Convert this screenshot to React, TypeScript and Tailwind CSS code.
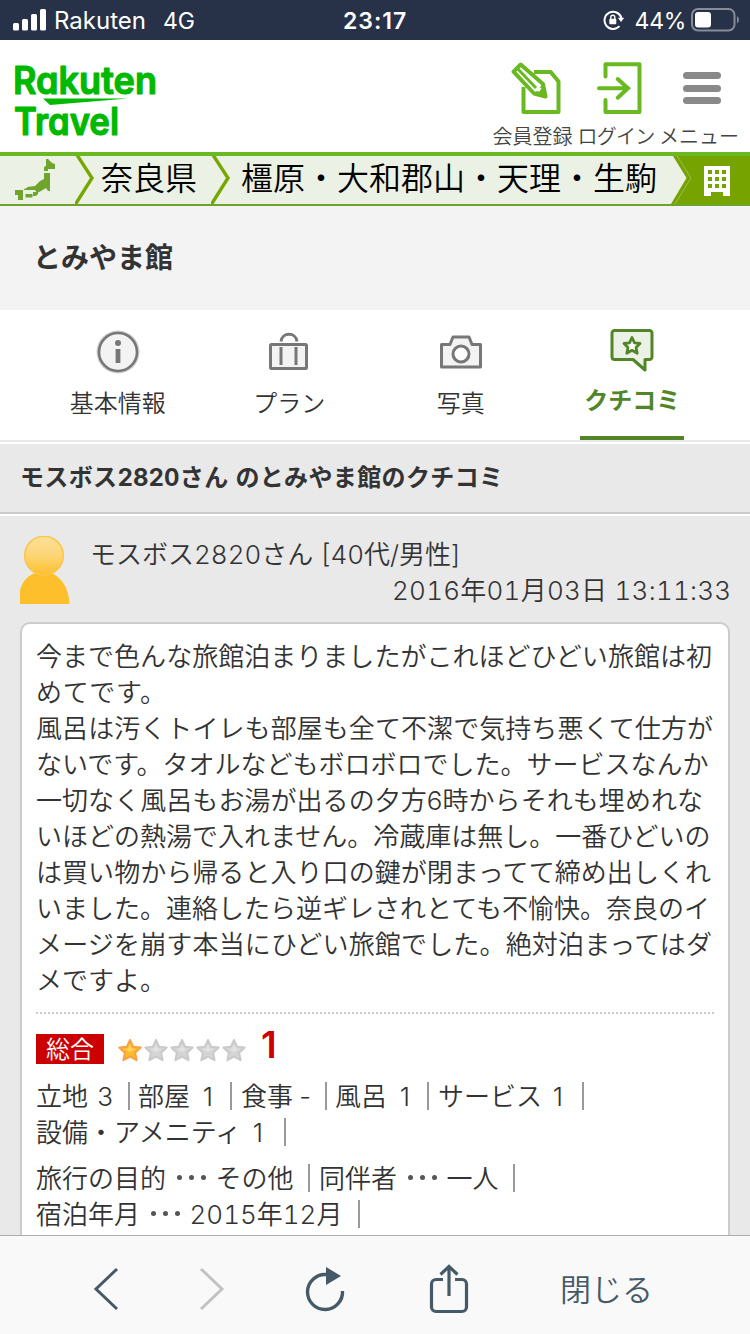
import React from 'react';

interface TabItem {
  label: string;
  icon: React.ReactNode;
  active?: boolean;
}

interface ScoreProps {
  className: string;
  label: string;
  value: string;
}

const REVIEW_LINES = [
  { text: '今まで色んな旅館泊まりましたがこれほどひどい旅館は初', className: 'w-[676px]' },
  { text: 'めてです。', className: 'w-[130px]' },
  { text: '風呂は汚くトイレも部屋も全て不潔で気持ち悪くて仕方が', className: 'w-[677px]' },
  { text: 'ないです。タオルなどもボロボロでした。サービスなんか', className: 'w-[672px]' },
  { text: '一切なく風呂もお湯が出るの夕方6時からそれも埋めれな', className: 'w-[667px]' },
  { text: 'いほどの熱湯で入れません。冷蔵庫は無し。一番ひどいの', className: 'w-[674px]' },
  { text: 'は買い物から帰ると入り口の鍵が閉まってて締め出しくれ', className: 'w-[675px]' },
  { text: 'いました。連絡したら逆ギレされとても不愉快。奈良のイ', className: 'w-[674px]' },
  { text: 'メージを崩す本当にひどい旅館でした。絶対泊まってはダ', className: 'w-[676px]' },
  { text: 'メですよ。', className: 'w-[130px]' },
];

function StatusBar() {
  return (
    <div className="flex h-10 shrink-0 items-center bg-[#273148] font-['Inter'] font-normal text-white">
      <div className="flex w-[343px] items-center pl-[13px]">
        <svg width="33" height="22" viewBox="0 0 33 22" fill="currentColor">
          <rect x="0" y="14" width="6" height="7.5" rx="1.5" />
          <rect x="9" y="10" width="6" height="11.5" rx="1.5" />
          <rect x="18" y="5" width="6" height="16.5" rx="1.5" />
          <rect x="27" y="0" width="6" height="21.5" rx="1.5" />
        </svg>
        <span className="ml-[8px] pt-[2px] text-[24px]">Rakuten</span>
        <span className="ml-[17px] pt-[2px] text-[23px]">4G</span>
      </div>
      <span className="pt-[2px] text-[23px] font-semibold tracking-[1px]">23:17</span>
      <div className="ml-auto flex items-center pr-[11px]">
        <svg width="22" height="22" viewBox="0 0 22 22" fill="none" stroke="currentColor" strokeWidth="2">
          <path d="M16.5 17.2A8.6 8.6 0 1 1 18.4 9" />
          <path d="M14.8 8.8h6.4L18 13z" fill="currentColor" stroke="none" />
          <rect x="6.3" y="9.8" width="7" height="5.4" rx="1" fill="currentColor" stroke="none" />
          <path d="M7.8 10V8.2a2 2 0 0 1 4 0V10" strokeWidth="1.4" />
        </svg>
        <span className="ml-[10px] pt-[2px] text-[23px] tracking-[-0.3px]">44%</span>
        <svg className="ml-[5px]" width="48" height="24" viewBox="0 0 48 24">
          <rect x="1" y="1" width="42.5" height="21.5" rx="6" fill="none" stroke="#868c99" strokeWidth="2" />
          <rect x="4" y="4" width="16" height="15.5" rx="3" fill="#fff" />
          <path d="M46 8v7.5q2-1.5 2-3.75T46 8z" fill="#868c99" />
        </svg>
      </div>
    </div>
  );
}

function Logo() {
  return (
    <svg className="overflow-visible" width="150" height="96" viewBox="0 -10 150 96" fill="#00b900" role="img" aria-label="Rakuten Travel">
      <g
        className="font-['Inter'] text-[38px] font-semibold [font-feature-settings:'cv11']"
        stroke="#00b900"
        strokeWidth="1.2"
        strokeLinejoin="round"
      >
        <text x="-1" y="32" textLength="144" lengthAdjust="spacingAndGlyphs">Rakuten</text>
        <text x="0" y="73" textLength="105" lengthAdjust="spacingAndGlyphs">Travel</text>
      </g>
      <path d="M29 36.500h85L36 43z" />
    </svg>
  );
}

function Header() {
  return (
    <header className="flex h-[116px] shrink-0 border-b-4 border-[#68b922] bg-white">
      <div className="ml-[14px] mt-[12px]">
        <Logo />
      </div>
      <nav className="ml-auto flex pr-[11px] text-[20px] leading-[24px] text-[#444]">
        <div className="flex w-[81px] flex-col items-center pt-5">
          <svg className="ml-[6px]" width="52" height="56" viewBox="0 0 52 56" fill="none" stroke="#68b922" strokeWidth="4">
            <path d="M24 12h16.700l7.800 9.500V52h-35V27" strokeLinejoin="round" />
            <path d="M10.700 4.500 3.500 11.700 24 33.500l11.500 3-2.500-12.500z" fill="#fff" strokeWidth="4" strokeLinejoin="round" />
            <path d="m7 8 19 20" strokeWidth="3" />
            <path d="m33 24-9 9.500 12.500 4.300z" fill="#68b922" stroke="none" />
            <path d="m27.500 27-2.500 4 4.500.5 2-3.500z" fill="#fff" stroke="none" />
          </svg>
          <span className="mt-[9px] whitespace-nowrap">会員登録</span>
        </div>
        <div className="ml-[3px] flex w-[80px] flex-col items-center pt-5">
          <svg className="ml-[8px]" width="46" height="56" viewBox="0 0 46 56" fill="none" stroke="#68b922" strokeWidth="4" strokeLinecap="round">
            <path d="M8.500 16.500V4.200h34V52h-34V40" strokeLinejoin="round" />
            <path d="M2 28.300h29M20.700 19l10.300 9.300-10.300 9.400" strokeLinejoin="miter" />
          </svg>
          <span className="mt-[9px] whitespace-nowrap tracking-[-0.800px]">ログイン</span>
        </div>
        <div className="ml-[3px] flex w-[80px] flex-col items-center">
          <div className="ml-[6px] mt-8 flex h-[53px] w-[38px] flex-col gap-[5.500px]">
            <span className="h-[7px] rounded-full bg-[#898989]" />
            <span className="h-[7px] rounded-full bg-[#898989]" />
            <span className="h-[7px] rounded-full bg-[#898989]" />
          </div>
          <span className="whitespace-nowrap">メニュー</span>
        </div>
      </nav>
    </header>
  );
}

function Chevron() {
  return (
    <svg className="shrink-0" width="20" height="48" viewBox="0 0 20 48" fill="none" stroke="#76a700" strokeWidth="3.400">
      <path d="M2-1 17 22 0 49" />
    </svg>
  );
}

function Breadcrumb() {
  return (
    <div className="flex h-[50px] shrink-0 items-center border-b-2 border-[#6ea32b] bg-[#ebf1e4] text-[32px] leading-[44px] text-black">
      <svg className="ml-[15px] shrink-0" width="40" height="42" viewBox="0 0 40 42" fill="#6fa52c">
        <path d="M31 0h2l4 4 3 1v5h-7v2h-4V8l2-1z" />
        <path d="M29 14h6v18h-2l-2-3-5 3-4 2-2-3H9v-1l3-1v-1l8-1 5-5 4-2z" />
        <path d="M18 33h5v2l-2 2h-3zM10.500 35h7v3.500h-7z" />
        <path d="M0 31h8v10H3v-5H0z" />
      </svg>
      <div className="ml-[20px] flex">
        <Chevron />
      </div>
      <span className="-mt-[2px] ml-[6px] w-[96px] whitespace-nowrap">奈良県</span>
      <div className="ml-[14px] flex">
        <Chevron />
      </div>
      <span className="-mt-[2px] ml-[10px] w-[416px] whitespace-nowrap">橿原・大和郡山・天理・生駒</span>
      <svg className="ml-auto shrink-0" width="80" height="48" viewBox="0 0 80 48">
        <path d="M3 0h77v48H1l15.500-26z" fill="#76a300" />
        <path d="m7 0 14 22L5 48" fill="none" stroke="#9dbf4d" />
        <path d="M34 10h26v30h-7v-4H41v4h-7z" fill="#fff" />
        <path
          d="M38 14h4v4h-4zM45 14h4v4h-4zM52 14h4v4h-4zM38 21h4v4h-4zM45 21h4v4h-4zM52 21h4v4h-4zM38 28h4v4h-4zM45 28h4v4h-4zM52 28h4v4h-4z"
          fill="#76a300"
        />
      </svg>
    </div>
  );
}

const TABS: TabItem[] = [
  {
    label: '基本情報',
    icon: (
      <svg width="44" height="44" viewBox="0 0 44 44">
        <circle cx="22" cy="22" r="21.500" fill="#cfcfcf" />
        <circle cx="22" cy="22" r="19" fill="#f3f3f3" stroke="#777" strokeWidth="2.600" />
        <circle cx="22" cy="13" r="3" fill="#777" />
        <path d="M19.600 19h4.800v14h-4.800z" fill="#777" />
      </svg>
    ),
  },
  {
    label: 'プラン',
    icon: (
      <svg width="44" height="44" viewBox="0 0 44 44" fill="none" stroke="#777" strokeWidth="3">
        <path d="M14 11.500C15 1.800 29 1.800 30 11.500" />
        <rect x="3.500" y="14.500" width="36" height="24" rx="1" fill="#f3f3f3" />
        <path d="M14 17v18M29 17v18" />
      </svg>
    ),
  },
  {
    label: '写真',
    icon: (
      <svg width="44" height="44" viewBox="0 0 44 44" fill="#f3f3f3" stroke="#777" strokeWidth="3" strokeLinejoin="round">
        <path d="M2.500 14.500H11l3-7.500h16l3 7.500h8.500v22.500h-39z" />
        <circle cx="22" cy="24" r="8" fill="#fff" />
      </svg>
    ),
  },
  {
    label: 'クチコミ',
    active: true,
    icon: (
      <svg width="44" height="44" viewBox="0 0 44 44" stroke="#528528" strokeWidth="3" strokeLinejoin="round">
        <path
          d="M4.500 1.500h35a2.500 2.500 0 0 1 2.500 2.500v24a2.500 2.500 0 0 1-2.500 2.500H35v10.500L23 30.500H4.500A2.500 2.500 0 0 1 2 28V4a2.500 2.500 0 0 1 2.500-2.500z"
          fill="#ebf1e4"
        />
        <path d="m22 8.500 2.500 5.300 5.500.7-4 3.900 1.200 5.900L22 21.300l-5.200 3 1.200-5.900-4-3.900 5.500-.7z" fill="#fff" strokeWidth="2.800" />
      </svg>
    ),
  },
];

function Tabs() {
  return (
    <nav className="h-[134px] shrink-0 bg-white">
      <div className="flex h-[132px] border-b-2 border-[#e9e9e9] px-8">
        {TABS.map((tab) => (
          <div key={tab.label} className="flex flex-1 justify-center">
            <div
              className={
                tab.active
                  ? 'flex h-[130px] w-[104px] flex-col items-center border-b-4 border-[#528528] pt-[19px] text-[24px] font-bold leading-[36px] text-[#528528]'
                  : 'flex h-[130px] w-[104px] flex-col items-center pt-5 text-[24px] leading-[36px]'
              }
            >
              {tab.icon}
              <span className={tab.active ? 'mt-[10px] whitespace-nowrap' : 'mt-[12px] whitespace-nowrap'}>{tab.label}</span>
            </div>
          </div>
        ))}
      </div>
    </nav>
  );
}

function Reviewer() {
  return (
    <div className="flex h-[106px] px-5 pt-5">
      <svg width="50" height="68" viewBox="0 0 50 68">
        <defs>
          <linearGradient id="face" x1="0" y1="0" x2="0" y2="1">
            <stop offset="0" stopColor="#fee09a" />
            <stop offset="0.500" stopColor="#fdd576" />
            <stop offset="1" stopColor="#fdc02c" />
          </linearGradient>
        </defs>
        <path d="M0 68V54C3 44 9 38 17 37h14c9 3 18 14 18.500 31z" fill="#fdc02c" />
        <circle cx="24" cy="19.500" r="19.300" fill="url(#face)" stroke="#f9c648" strokeWidth="1.500" />
      </svg>
      <div className="flex-1 pt-px text-[26px] leading-[36px] tabular-nums">
        <p className="ml-[20px] w-[375px] whitespace-nowrap">モスボス2820さん [40代/男性]</p>
        <p className="-mr-px ml-auto w-[339px] whitespace-nowrap text-right tracking-[0.250px]">2016年01月03日 13:11:33</p>
      </div>
    </div>
  );
}

function Star({ filled }: { filled: boolean }) {
  return (
    <svg width="26" height="26" viewBox="0 0 26 26" strokeLinejoin="round">
      <path
        d="m13 3 3.100 6.700 7.600.9-5.500 5.200 1.400 7.400-6.600-3.500-6.600 3.500 1.400-7.400L2.300 10.600l7.600-.9z"
        fill={filled ? '#fdb82c' : '#d4d4d4'}
        stroke={filled ? '#fba044' : '#cacaca'}
        strokeWidth="2"
      />
      <path d="m13 7 1.800 4.500 4 .5-5.800 3-5.800-3 4-.5z" fill={filled ? '#ffd75a' : '#e2e2e2'} />
    </svg>
  );
}

function Score({ className, label, value }: ScoreProps) {
  return (
    <span className={`flex h-7 items-center justify-between whitespace-nowrap border-r-2 border-[#999] pt-[2px] ${className}`}>
      <span>{label}</span>
      <span>{value}</span>
    </span>
  );
}

function Dots() {
  return (
    <span className="-mt-[3px] ml-[11px] mr-[10px] flex gap-[7.500px]">
      <i className="h-[4.500px] w-[4.500px] rounded-full bg-[#555]" />
      <i className="h-[4.500px] w-[4.500px] rounded-full bg-[#555]" />
      <i className="h-[4.500px] w-[4.500px] rounded-full bg-[#555]" />
    </span>
  );
}

function Detail({ className, label, value }: ScoreProps) {
  return (
    <span className={`flex h-7 items-center whitespace-nowrap border-r-2 border-[#999] pt-[2px] ${className}`}>
      {label}
      <Dots />
      {value}
    </span>
  );
}

function ReviewCard() {
  return (
    <article className="mx-5 h-[640px] rounded-[10px] border-2 border-[#ccc] bg-white px-[14px] pt-[15px] text-[26px] leading-[36px]">
      {REVIEW_LINES.map((line) => (
        <p key={line.text} className={`whitespace-nowrap [text-align-last:justify] ${line.className}`}>
          {line.text}
        </p>
      ))}
      <div className="mt-[13px] border-t-2 border-dotted border-[#ccc]" />

      {/* Overall rating */}
      <div className="mt-5 flex h-[30px] items-center">
        <span className="flex h-[30px] w-[68px] items-center justify-center bg-[#c00] pt-px text-[24px] text-white">総合</span>
        <span className="ml-[13px] flex pt-[2px]">
          {[1, 2, 3, 4, 5].map((n) => (
            <Star key={n} filled={n <= 1} />
          ))}
        </span>
        <span className="-mt-[9px] ml-[14px] text-[37px] font-semibold text-[#c00]">1</span>
      </div>

      {/* Category scores */}
      <div className="mt-[18px] flex">
        <Score className="w-[94px] pr-[15px]" label="立地" value="3" />
        <Score className="ml-2 w-[94px] pr-[17px]" label="部屋" value="1" />
        <Score className="ml-[9px] w-[86px] pr-[14px]" label="食事" value="-" />
        <Score className="ml-2 w-[94px] pr-[17px]" label="風呂" value="1" />
        <Score className="ml-[9px] w-[146px] pr-[19px]" label="サービス" value="1" />
      </div>
      <div className="mt-2 flex">
        <Score className="w-[250px] pr-[21px]" label="設備・アメニティ" value="1" />
      </div>
      <div className="mt-[18px] flex">
        <Detail className="w-[274px]" label="旅行の目的" value="その他" />
        <Detail className="ml-[9px] w-[196px]" label="同伴者" value="一人" />
      </div>
      <div className="mt-2 flex tabular-nums">
        <Detail className="w-[324px]" label="宿泊年月" value="2015年12月" />
      </div>
    </article>
  );
}

function Toolbar() {
  return (
    <footer className="flex h-[99px] shrink-0 items-start border-t border-[#acacac] bg-[#f9f9f9] pt-7 text-[#455a66]">
      <svg className="ml-[92px]" width="28" height="52" viewBox="0 0 28 52" fill="none" stroke="currentColor" strokeWidth="3">
        <path d="M25 5 4 25l21 20" />
      </svg>
      <svg className="ml-[79px]" width="28" height="52" viewBox="0 0 28 52" fill="none" stroke="#c2c2c2" strokeWidth="3">
        <path d="m2 5 21 20L2 45" />
      </svg>
      <svg className="ml-[77px]" width="42" height="52" viewBox="0 0 42 52">
        <path d="M22 10.500A17.500 17.500 0 1 0 38.500 27" fill="none" stroke="currentColor" strokeWidth="3.400" />
        <path d="m22 3 15 9-15 9z" fill="currentColor" />
      </svg>
      <svg className="ml-[83px]" width="40" height="52" viewBox="0 0 40 52" fill="none" stroke="currentColor" strokeWidth="3.200">
        <path d="M14 15.500H7A4.500 4.500 0 0 0 2.500 20v23A4.500 4.500 0 0 0 7 47.500h26a4.500 4.500 0 0 0 4.500-4.500V20a4.500 4.500 0 0 0-4.500-4.500h-7" />
        <path d="M20 32V3M11.500 10.500 20 2.500l8.500 8" />
      </svg>
      <span className="ml-[91px] mt-[4px] text-[31px] leading-[44px]">閉じる</span>
    </footer>
  );
}

export default function App() {
  return (
    <div
      className="flex h-[1334px] w-[750px] flex-col overflow-hidden bg-[#e9e9e9] font-['Inter','Noto_Sans_CJK_JP',sans-serif] font-[350] text-[#333]"
      lang="ja"
    >
      <StatusBar />
      <Header />
      <Breadcrumb />
      <h1 className="h-[104px] shrink-0 bg-[#f3f3f3] pl-[33px] pt-[32px] text-[28px] font-bold leading-[40px]">とみやま館</h1>
      <Tabs />
      <main className="flex-1 overflow-hidden">
        <h2 className="h-[70px] border-b-2 border-[#ccc] pl-5 pt-[15px] text-[24px] font-bold leading-[38px] tabular-nums">
          <span className="block w-[483px] whitespace-nowrap [text-align-last:justify]">モスボス2820さん のとみやま館のクチコミ</span>
        </h2>
        <div className="border-t-2 border-white">
          <Reviewer />
          <ReviewCard />
        </div>
      </main>
      <Toolbar />
    </div>
  );
}
